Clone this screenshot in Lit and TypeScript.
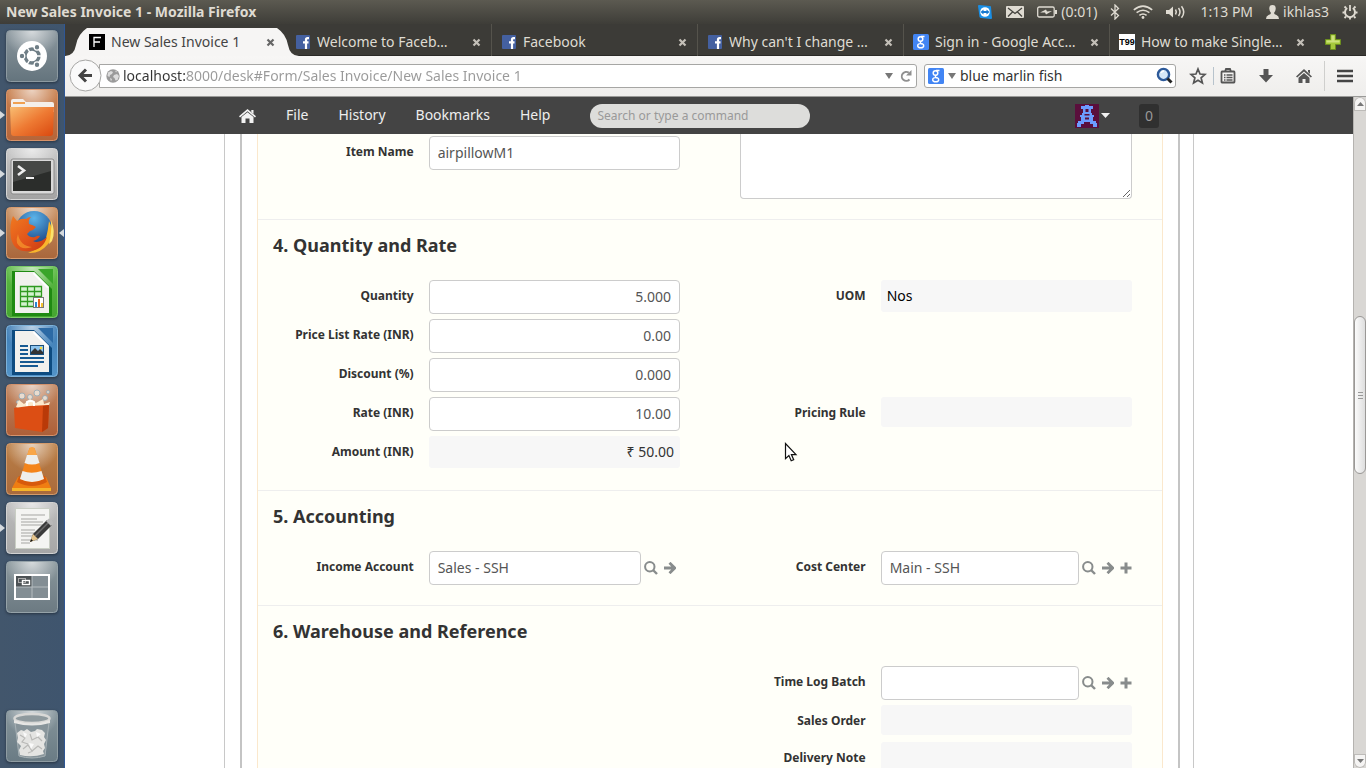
import { LitElement, html, svg, css, nothing } from "lit";
import { customElement, property } from "lit/decorators.js";
import { classMap } from "lit/directives/class-map.js";

/* ---------- Launcher artwork, drawn on a 52 x 52 tile ---------- */

const tile = (from: string, to: string, edge: string, id: string) => svg`
  <defs>
    <linearGradient id=${id} x1="0" y1="0" x2="0" y2="1">
      <stop offset="0" stop-color=${from}></stop>
      <stop offset="1" stop-color=${to}></stop>
    </linearGradient>
    <radialGradient id=${id + "s"} cx=".5" cy="0" r=".55">
      <stop offset="0" stop-color="#fff" stop-opacity=".65"></stop>
      <stop offset="1" stop-color="#fff" stop-opacity="0"></stop>
    </radialGradient>
  </defs>
  <rect x=".5" y=".5" width="51" height="51" rx="4" fill=${`url(#${id})`} stroke=${edge}></rect>
  <rect x="1" y="1" width="50" height="50" rx="4" fill=${`url(#${id}s)`}></rect>`;

const launcherArt: Record<string, unknown> = {
  dash: svg`${tile("#8b979e", "#64747d", "#8d9aa1", "dash")}
    <circle cx="26" cy="26" r="15" fill="#fff"></circle>
    <circle cx="26" cy="26" r="7" fill="none" stroke="#6f7e86" stroke-width="3.4"></circle>
    <path d="M26 26 36 26M26 26 21 17.300M26 26 21 34.700" stroke="#fff" stroke-width="1.400"></path>
    <g fill="#6f7e86" stroke="#fff" stroke-width="1.2">
      <circle cx="16" cy="26" r="2.800"></circle><circle cx="31" cy="17.300" r="2.800"></circle><circle cx="31" cy="34.700" r="2.800"></circle>
    </g>`,
  files: svg`${tile("#c9814f", "#b5653a", "#d8936a", "files")}
    <path d="M5 12q0-2 2-2h10l3 3h26q2 0 2 2v8H5z" fill="#f4efea"></path>
    <path d="M7 13h12v2H7z" fill="#f0a050"></path>
    <defs><linearGradient id="fold" x1="0" y1="0" x2="1" y2="1"><stop offset="0" stop-color="#f8bd72"></stop><stop offset=".5" stop-color="#ee7a33"></stop><stop offset="1" stop-color="#d9480f"></stop></linearGradient></defs>
    <path d="M4 18h44l-1 26q0 3-3 3H8q-3 0-3-3z" fill="url(#fold)"></path>`,
  terminal: svg`${tile("#c6c6c6", "#a3a3a3", "#d6d6d6", "term")}
    <rect x="5" y="11" width="43" height="35" rx="2" fill="#d9d9d9" stroke="#8a8a8a"></rect>
    <rect x="7" y="13" width="38" height="30" fill="#2b2d2b"></rect>
    <path d="M7 13h38v10L7 34z" fill="#454745"></path>
    <path d="M12 18l6 4.500-6 4.500" fill="none" stroke="#eee" stroke-width="2.600"></path>
    <path d="M20 30h8" stroke="#eee" stroke-width="2"></path>`,
  firefox: svg`${tile("#c99061", "#a9673c", "#d79b6e", "ffx")}
    <defs>
      <radialGradient id="globe" cx=".5" cy=".2" r=".9"><stop offset="0" stop-color="#5bb4ea"></stop><stop offset="1" stop-color="#0c2c6e"></stop></radialGradient>
      <linearGradient id="fox" x1="0" y1="0" x2="1" y2="1"><stop offset="0" stop-color="#f07a20"></stop><stop offset=".6" stop-color="#e0511a"></stop><stop offset="1" stop-color="#c63a10"></stop></linearGradient>
    </defs>
    <circle cx="28" cy="22" r="18" fill="url(#globe)"></circle>
    <path d="M43 14q7 14-1 23-8 10-20 9 14-5 18-15 2-7 3-17z" fill="#f8b52c"></path>
    <path d="M45 13q5 12 1 21l-3 3q3-12 2-24z" fill="#fde36a"></path>
    <path d="M7 9l4 5q4-3 9-2 2-2 5-2-3 3-2 7 4 1 7 3-2 3-6 4l-3 3q3 4 8 3 3-2 5-1-2 4-7 5 6 3 14-4-4 13-17 14Q8 46 5 31 3 18 7 9z" fill="url(#fox)"></path>
    <path d="M12 27q2 12 14 13-11 4-15-4-1-4 1-9z" fill="#f79a2e" opacity=".7"></path>`,
  calc: svg`${tile("#5dbb45", "#45a431", "#7acb66", "calc")}
    <path d="M6 5h22l18 18v27H6z" fill="#1f8a12"></path><path d="M32 3h15v15z" fill="#3aa52a"></path>
    <path d="M9 6h19l15 15v26H9z" fill="#f1f1ee"></path><path d="M28 6l15 15-2 1-14-14z" fill="#fff"></path>
    <path d="M14 20h22v21H14z" fill="#d5f2cf"></path>
    <path d="M14.500 20.500h21v20h-21zM14.500 25.500h21M14.500 30.500h21M14.500 35.500h21M21.500 20v21M28.500 20v21" fill="none" stroke="#2f9a20" stroke-width="1.300"></path>
    <rect x="27.500" y="31.500" width="10" height="10" fill="#fff" stroke="#777"></rect>
    <path d="M29 36h2v5h-2z" fill="#2b87d3"></path><path d="M32 33h2v8h-2z" fill="#e8641b"></path><path d="M35 37h2v4h-2z" fill="#f2c12e"></path>`,
  writer: svg`${tile("#3f7db5", "#5293c8", "#7db2da", "wri")}
    <path d="M6 5h22l18 18v27H6z" fill="#0d4b80"></path><path d="M32 3h15v15z" fill="#2c6aa5"></path>
    <path d="M9 6h19l15 15v26H9z" fill="#f1f1ee"></path><path d="M28 6l15 15-2 1-14-14z" fill="#fff"></path>
    <path d="M14 21h8M14 25h8M14 29h8M14 33h24M14 37h24M14 41h18" stroke="#175a92" stroke-width="2"></path>
    <rect x="24.500" y="20.500" width="13" height="9" fill="#8cc4ee" stroke="#1b4f7b"></rect>
    <path d="M25 29v-2l4-4 3 3 2-2 3 3v2z" fill="#333"></path><circle cx="35" cy="23" r="1.300" fill="#f6d738"></circle>`,
  software: svg`${tile("#c08660", "#ad5f38", "#d4926c", "soft")}
    <g fill="#e9dccf" stroke="#8fa7b5" stroke-width=".8"><circle cx="16" cy="12" r="3"></circle><circle cx="24" cy="13" r="2.500"></circle><circle cx="31" cy="9" r="3"></circle><circle cx="39" cy="14" r="2.500"></circle><circle cx="42" cy="8" r="1.500"></circle><circle cx="12" cy="18" r="1.500"></circle></g>
    <path d="M10 23l3-7 5 4 6-5 6 4 7-4 1 5 6-2-2 6H12z" fill="#fbe9cd"></path>
    <path d="M8 24l15-2 20-1-1 23-6 4-27-4z" fill="#dc4e14"></path>
    <path d="M37 22l6-1-1 23-6 4z" fill="#b93a08"></path>
    <path d="M21 22v-4q4-2 7 0v4" fill="none" stroke="#fff" stroke-width="2"></path>`,
  vlc: svg`${tile("#bb8047", "#a96a3c", "#d39a6a", "vlc")}
    <path d="M12 34h28l5 11v3H6v-3z" fill="#f07d12"></path><path d="M6 45h39v3H6z" fill="#f5b52a"></path>
    <path d="M13 33h26l2 6q-15 8-30 0z" fill="#d75a0c"></path>
    <path d="M23.500 5h5L38 36q-12 6-24 0z" fill="#f4841a"></path>
    <path d="M21 12h10l2.500 8q-7.500 3-15 0zM16.500 28q9 3.500 19 0l2.500 8q-12 6-24 0z" fill="#eeeeec"></path>
    <path d="M23.500 5q2.500-2 5 0l2.200 7h-9.500z" fill="#f9a648"></path>`,
  editor: svg`${tile("#bdbdbd", "#a6a6a6", "#d2d2d2", "edit")}
    <rect x="9.500" y="6.500" width="34" height="40" fill="#f4f4f2" stroke="#c9cec4"></rect>
    <path d="M15 13h24M15 17h16M15 20h22M15 23h23M15 28h14M15 31h17M15 34h12M15 38h17M15 41h9" stroke="#a5a5a2" stroke-width="1"></path>
    <path d="M24 40l3-8 14-14 5 5-14 14z" fill="#3a3a3a"></path><path d="M29 34l14-14" stroke="#6a6a6a" stroke-width="1.500"></path>
    <path d="M40 19l3-2.500q3 1 4.500 4.500L45 24z" fill="#b9b9b9"></path><path d="M24 40l3-8 5 5z" fill="#e5c48b"></path><path d="M24 40l1.200-3 1.800 1.800z" fill="#111"></path>`,
  workspaces: svg`${tile("#8a979c", "#6c7a82", "#95a2a8", "work")}
    <rect x="9" y="14" width="34" height="24" fill="#838e94" stroke="#fff" stroke-width="2"></rect>
    <path d="M10 15h16v11H10z" fill="#4d5356"></path><path d="M26 15v22M10 26h32" stroke="#b5bcbf"></path>
    <rect x="12.500" y="17.500" width="7" height="4" fill="none" stroke="#aaa"></rect><rect x="16.500" y="19.500" width="7" height="4" fill="none" stroke="#fff" stroke-width="1.400"></rect>`,
  trash: svg`${tile("#85949b", "#6a7b84", "#8f9ca2", "trash")}
    <path d="M9 12h34l-4 34q-13 4-26 0z" fill="#87949a" stroke="#a7b1b5"></path>
    <path d="M11 23l4-3 3 1 3-2 4 3 4-1 2-2 5 1 3 3-1 4 2 3-2 4 1 4-2 3 1 3q-12 4-24 1l-1-5 2-4-4-4 1-4z" fill="#e4e4e2"></path>
    <path d="M14 25l5 3-3 4 6 2M24 24l2 6 6-3 4 4M17 39l5-4 4 6 6-5 4 3M22 43l5-2" fill="none" stroke="#b9b9b7" stroke-width="1.200"></path>
    <path d="M17 22l4 2-2 4zM30 22l5 2-4 3zM23 33l5 1-3 5z" fill="#fafafa"></path>
    <ellipse cx="26" cy="8.500" rx="17.500" ry="4.500" fill="#8f9a9e" stroke="#d8d8d6" stroke-width="2.500"></ellipse>
    <path d="M8 10q18 7 36 0v3q-18 5-36 0z" fill="#e6e6e4"></path>`,
};

const launcherItems = [
  { id: "dash", name: "Dash home", running: false },
  { id: "files", name: "Files", running: true },
  { id: "terminal", name: "Terminal", running: true },
  { id: "firefox", name: "Firefox", running: true, active: true },
  { id: "calc", name: "LibreOffice Calc", running: false },
  { id: "writer", name: "LibreOffice Writer", running: false },
  { id: "software", name: "Software Centre", running: false },
  { id: "vlc", name: "VLC", running: false },
  { id: "editor", name: "Text Editor", running: true },
  { id: "workspaces", name: "Workspaces", running: false },
  { id: "trash", name: "Trash", running: false },
];

/* ---------- Small icons ---------- */

const icon = (w: number, h: number, body: unknown) =>
  html`<svg width=${w} height=${h} viewBox="0 0 ${w} ${h}" aria-hidden="true">${body}</svg>`;

const googleG = svg`
  <rect width="16" height="16" rx="1.500" fill="#4285f4"></rect>
  <g fill="none" stroke="#fff"><circle cx="7.500" cy="5" r="2.300" stroke-width="1.500"></circle><ellipse cx="7.700" cy="11.700" rx="3" ry="2.100" stroke-width="1.400"></ellipse><path d="M8 2.500h3.500M8.500 7.200q-2 .800-.500 2l1.500 1" stroke-width="1.300"></path></g>`;

const favicons: Record<string, unknown> = {
  frappe: svg`<rect width="16" height="16" fill="#000"></rect><path d="M5 13V3.500h7M5 8h6" fill="none" stroke="#fff" stroke-width="1.300"></path>`,
  facebook: svg`<rect x="1" y="1" width="14" height="14" rx="1" fill="#4460a0"></rect><path d="M14 4.200h-1.500q-1.500 0-1.500 1.500V15M8 8.400h5.500" fill="none" stroke="#fff" stroke-width="2.200"></path>`,
  google: googleG,
};

const closeX = icon(9, 9, svg`<path d="M1.500 1.500l6 6M7.500 1.500l-6 6" stroke="currentColor" stroke-width="2.200"></path>`);
const magnifier = icon(14, 14, svg`<circle cx="5.800" cy="5.800" r="4.700" fill="none" stroke="currentColor" stroke-width="2"></circle><path d="M9 9l4 4" stroke="currentColor" stroke-width="2.400"></path>`);
const arrowRight = icon(12, 12, svg`<path d="M0 6h10M5.500 .800l5.200 5.200-5.200 5.200" fill="none" stroke="currentColor" stroke-width="2.800"></path>`);
const plus = icon(12, 12, svg`<path d="M.500 6h11M6 .500v11" stroke="currentColor" stroke-width="3"></path>`);
const chevron = icon(8, 6, svg`<path d="M0 0h8L4 6z" fill="#777"></path>`);

const tabs = [
  { title: "New Sales Invoice 1", fav: "frappe", active: true },
  { title: "Welcome to Faceb…", fav: "facebook" },
  { title: "Facebook", fav: "facebook" },
  { title: "Why can't I change …", fav: "facebook" },
  { title: "Sign in - Google Acc…", fav: "google" },
  { title: "How to make Single…", fav: "t99" },
];

/* ---------- Unity launcher ---------- */

@customElement("unity-launcher")
class UnityLauncher extends LitElement {
  static styles = css`
    :host { display: flex; flex-direction: column; gap: 7px; box-sizing: border-box; padding: 6px 6px; width: 65px;
      background: linear-gradient(90deg, #42566c, #3f556e); border-right: 1px solid #2f5796; }
    .slot { position: relative; display: flex; }
    .slot.last { margin-top: auto; }
    button { all: unset; display: block; width: 52px; height: 52px; border-radius: 4px; box-shadow: 0 1px 3px rgba(0, 0, 0, 0.4); }
    svg { display: block; }
    .run::before { content: ""; position: absolute; left: -6px; top: 22px; border: 4px solid transparent; border-left: 5px solid #d5dade; border-right: 0; }
    .focus::after { content: ""; position: absolute; right: -6px; top: 22px; border: 4px solid transparent; border-right: 5px solid #d5dade; border-left: 0; }
  `;
  render() {
    return launcherItems.map(
      (it, i) => html`<div class=${classMap({ slot: true, last: i === launcherItems.length - 1, run: it.running, focus: !!it.active })}>
        <button aria-label=${it.name}>${icon(52, 52, launcherArt[it.id])}</button>
      </div>`
    );
  }
}

/* ---------- One row of the form: label plus control ---------- */

@customElement("form-field")
class FormField extends LitElement {
  @property() label = "";
  @property() value = "";
  @property() kind: "text" | "number" | "link" | "output" = "text";
  @property({ type: Boolean }) creatable = false;
  @property({ type: Boolean }) money = false;

  static styles = css`
    :host { display: grid; grid-template-columns: minmax(0, 1fr) minmax(0, 2fr); margin: 0 15px; font-family: "Noto Sans", sans-serif; align-items: start; }
    label { padding-top: 7px; text-align: right; font-size: 12px; line-height: 17px; font-weight: 700; color: #333; }
    .control { display: flex; align-items: center; margin: 0 15px; }
    input { flex: 1; min-width: 0; box-sizing: border-box; height: 34px; padding: 5px 8px 7px; border: 1px solid #ccc; border-radius: 4px;
      background: #fff; font: 14px/20px "Noto Sans", sans-serif; color: #555; outline: none; }
    .number { text-align: right; }
    output { flex: 1; box-sizing: border-box; min-height: 30px; padding: 6px 6px; margin-bottom: 2px; border-radius: 3px; background: #f7f7f7; font-size: 14px; line-height: 20px; color: #000; }
    .money { text-align: right; color: #333; }
    .tools { display: flex; align-items: center; gap: 6px; margin-left: 3px; padding-right: 4px; color: #888c8c; }
    .full { padding-right: 0; }
    button { all: unset; display: flex; }
  `;
  render() {
    const k = this.kind;
    return html`
      <label for="c">${this.label}</label>
      <div class="control">
        ${k === "output"
          ? html`<output id="c" class=${classMap({ money: this.money })}>${this.value}</output>`
          : html`<input id="c" class=${k} .value=${this.value} />`}
        ${k === "link"
          ? html`<span class=${classMap({ tools: true, full: this.creatable })}>
              <button aria-label="Search">${magnifier}</button>
              <button aria-label="Open">${arrowRight}</button>
              ${this.creatable ? html`<button aria-label="New">${plus}</button>` : nothing}
            </span>`
          : nothing}
      </div>`;
  }
}

@customElement("app-root")
class AppRoot extends LitElement {
  static styles = css`
    :host { display: grid; grid-template-rows: auto minmax(0, 1fr); height: 100vh; overflow: hidden; position: relative; font-family: "Noto Sans", sans-serif; }
    button { all: unset; display: flex; align-items: center; }
    svg { display: block; flex: none; }

    .panel { display: flex; align-items: center; box-sizing: border-box; height: 24px; padding: 0 8px 0 6px; background: linear-gradient(#5c5a51, #3e3d38); color: #dfdbd2; }
    .panel h1 { flex: 1; margin: 0; font-size: 14px; line-height: 24px; font-weight: 700; }
    .indicators { display: flex; align-items: center; gap: 13px; font-size: 14px; line-height: 24px; }
    .indicators span { display: flex; align-items: center; gap: 4px; }

    .desktop { display: grid; grid-template-columns: auto minmax(0, 1fr); min-height: 0; }
    .browser { display: grid; grid-template-rows: auto auto minmax(0, 1fr); min-height: 0; }

    .tabs { display: flex; height: 32px; padding: 0 51px 0 14px; background: #3c3b37; position: relative; box-shadow: inset 0 -1px #2b2a27; }
    .tab { position: relative; flex: 1 1 0; min-width: 0; display: flex; align-items: center; gap: 6px; padding: 4px 10px 0; color: #dfdbd2; font: 14px/20px "Noto Sans", sans-serif; box-sizing: border-box; }
    .tab .title { flex: 1; min-width: 0; overflow: hidden; white-space: nowrap; display: block; }
    .tab .close { color: #c4c0b8; }
    .tab:not(.active) + .tab { border-left: 1px solid #55534c; padding-left: 9px; }
    .active { color: #444; }
    .active .close { color: #666; }
    .shape { position: absolute; left: -14px; right: -14px; top: 4px; height: 28px; display: flex; }
    .shape i { flex: 1; background: #f6f5f4; }
    .title, .close, .tab > svg, .t99 { position: relative; }
    .t99 { flex: none; width: 16px; height: 16px; background: #fff; color: #000; font: 700 9px/16px "Liberation Sans", sans-serif; text-align: center; }
    .newtab { position: absolute; right: 25px; top: 10px; }

    .toolbar { display: flex; align-items: center; box-sizing: border-box; height: 41px; padding: 0 13px 1px 4px; background: linear-gradient(#f7f6f5, #efeeec); border-bottom: 1px solid #9a9a98; }
    .back { position: relative; z-index: 1; margin-right: -1px; }
    .url, .search { display: flex; align-items: center; box-sizing: border-box; height: 24px; background: #fff; border: 1px solid #a6a6a4; border-radius: 0 3px 3px 0; }
    .url { flex: 1; gap: 7px; padding: 0 4px 0 6px; margin-left: -2px; }
    .search { width: 252px; flex: none; border-radius: 3px; margin: 0 13px 0 7px; padding: 0 2px 0 3px; gap: 4px; }
    .url input, .search input { flex: 1; min-width: 0; border: 0; padding: 1px 0 0; background: none; outline: none; font: 14px/20px "Noto Sans", sans-serif; color: #333; }
    .url input { margin-left: -4px; background: linear-gradient(90deg, #333 64px, #999 64px); -webkit-background-clip: text; background-clip: text; color: transparent; }
    .actions { display: flex; align-items: center; color: #555; gap: 22px; }
    .actions .pair { display: flex; align-items: center; gap: 6px; }
    .rule { width: 1px; height: 18px; background: #b7c3cc; }
    .tall { height: 30px; background: #cfcfcd; margin: 0 -10px 0 -10px; }

    .view { display: grid; grid-template-columns: minmax(0, 1fr) 13px; min-height: 0; }
    .page { display: grid; grid-template-rows: auto minmax(0, 1fr); min-height: 0; background: #fff; }
    .navbar { background: #444; }
    .nav { display: flex; align-items: center; max-width: 970px; height: 37px; margin: 0 auto; box-sizing: border-box; padding-right: 35px; }
    .nav a { padding: 0 15px 2px; color: #eee; text-decoration: none; font-size: 14px; line-height: 34px; }
    .nav .home { padding: 0 15px; }
    .nav input { width: 220px; height: 24px; box-sizing: border-box; margin-left: 25px; padding: 0 7px; border: 0; border-radius: 12px; background: #dddddb; font: 12px/20px "Noto Sans", sans-serif; color: #555; outline: none; }
    .nav input::placeholder { color: #999; opacity: 1; }
    .user { margin-left: auto; gap: 2px; }
    .count { margin-left: 29px; justify-content: center; width: 20px; height: 24px; border-radius: 3px; background: #303030; color: #999; font-size: 14px; line-height: 20px; }

    .scroll { overflow: hidden; min-height: 0; }
    .sheet { box-sizing: border-box; width: 100%; max-width: 970px; margin: 0 auto; padding: 0 13px 0 15px; border: solid #c8c8c8; border-width: 0 1px; }
    .frame { padding: 0 15px; border: solid #c4c4c4; border-width: 0 2px; }
    form { display: block; background: #fffff9; border: solid #fbe8cd; border-width: 0 1px; }
    section { padding: 15px 0 20px; border-top: 1px solid #eee; }
    section.cut { padding-top: 0; border-top: 0; }
    h2 { margin: 0 15px 25px; font-size: 18px; line-height: 20px; font-weight: 700; color: #333; }
    .cols { display: grid; grid-template-columns: repeat(2, minmax(0, 1fr)); row-gap: 5px; }
    .right { grid-column: 2; }
    .left { grid-column: 1; }
    .cut form-field { padding-top: 2px; }
    textarea { display: block; margin: 0 30px; box-sizing: border-box; height: 65px; border: 1px solid #ccc; border-top: 0; border-radius: 0 0 4px 4px; background: #fff; resize: vertical; outline: none; }

    .bar { display: grid; grid-template-rows: 14px minmax(0, 205fr) 158px minmax(0, 280fr) 14px; background: #d9d7d4; border-left: 1px solid #b5b3b0; box-sizing: border-box; }
    .bar button { justify-content: center; background: #f5f4f3; box-shadow: inset 0 0 0 1px #bdbbb8; border-radius: 6px 6px 0 0; }
    .thumb { grid-row: 3; box-sizing: border-box; border: 1px solid #9a9896; border-radius: 6px; background: linear-gradient(90deg, #fbfbfb, #dedede); display: grid; place-items: center; }
    .bar .down { grid-row: 5; border-radius: 0 0 6px 6px; }
    .cursor { position: absolute; left: 784px; top: 442px; }
  `;

  private renderPanel() {
    return html`<header class="panel">
      <h1>New Sales Invoice 1 - Mozilla Firefox</h1>
      <div class="indicators">
        ${icon(16, 16, svg`<path d="M1 2q0-1 1-1l11 1q1 0 1 1l1 11q0 1-1 1L4 14q-1 0-1.500-1z" fill="#1a8fe6"></path><circle cx="8" cy="8" r="4.800" fill="#fff"></circle><path d="M3.500 8l3-2.500V7h3V5.500l3 2.500-3 2.500V9h-3v1.500z" fill="#1578d0"></path>`)}
        <span>${icon(18, 14, svg`<rect x="0" y="1" width="18" height="12" rx="1" fill="#dfdbd2"></rect><path d="M2 3l7 5.500L16 3M2 11.500l4.500-4.500M16 11.500l-4.500-4.500" fill="none" stroke="#44433e" stroke-width="1.300"></path>`)}</span>
        <span>${icon(20, 12, svg`<rect x=".700" y="1" width="16.500" height="10" rx="1.500" fill="none" stroke="#dfdbd2" stroke-width="1.300"></rect><path d="M18 4h2v4h-2z" fill="#dfdbd2"></path><path d="M3 6.500L9 3.500l1 2 5-.500-6 3.500-1-2z" fill="#dfdbd2"></path>`)}(0:01)</span>
        ${icon(10, 16, svg`<path d="M1 4.500l7.500 7L5 15V1l3.500 3.500-7.500 7" fill="none" stroke="#dfdbd2" stroke-width="1.300"></path>`)}
        ${icon(20, 14, svg`<path d="M.800 4.800q9.200-7.500 18.400 0M3.600 7.700q6.400-5 12.800 0M6.400 10.400q3.600-2.800 7.200 0" fill="none" stroke="#dfdbd2" stroke-width="1.600"></path><circle cx="10" cy="12.500" r="1.400" fill="#dfdbd2"></circle>`)}
        ${icon(21, 14, svg`<path d="M0 5h3l4-3.500v11L3 9H0z" fill="#dfdbd2"></path><path d="M9.500 4.500q1.600 2.500 0 5M12.500 3q3 4 0 8M15.500 1.200q4.500 5.800 0 11.600" fill="none" stroke="#dfdbd2" stroke-width="1.500"></path>`)}
        <span>1:13 PM</span>
        <span>${icon(13, 14, svg`<path d="M6.500 0q3.500 0 3.200 4-.200 2.500-1.700 4 .200 1.500 2.500 2Q13 10.800 13 14H0q0-3.200 2.500-4 2.300-.500 2.500-2Q3.500 6.500 3.300 4 3 0 6.500 0z" fill="#dfdbd2"></path>`)}ikhlas3</span>
        ${icon(16, 16, svg`<g fill="none" stroke="#dfdbd2"><path d="M5.200 4A5 5 0 1 0 10.800 4" stroke-width="2"></path><path d="M8 1v6M2.500 2.500L4 4M13.500 2.500L12 4M.500 8.500h2M13.500 8.500h2M2.500 14l1.500-1.500M13.500 14L12 12.500M8 13.500v2" stroke-width="1.800"></path></g>`)}
      </div>
    </header>`;
  }

  private renderTabs() {
    return html`<nav class="tabs" aria-label="Tabs">
      ${tabs.map(
        (t) => html`<div class=${classMap({ tab: true, active: !!t.active })}>
          ${t.active
            ? html`<div class="shape">
                ${icon(22, 28, svg`<path d="M0 28Q9 28 11 17T22 0V28z" fill="#f6f5f4"></path>`)}<i></i>
                ${icon(22, 28, svg`<path d="M22 28Q13 28 11 17T0 0V28z" fill="#f6f5f4"></path>`)}
              </div>`
            : nothing}
          ${t.fav === "t99" ? html`<span class="t99">T99</span>` : icon(16, 16, favicons[t.fav])}
          <button class="title">${t.title}</button>
          <button class="close" aria-label="Close tab">${closeX}</button>
        </div>`
      )}
      <button class="newtab" aria-label="New tab">
        ${icon(16, 16, svg`<path d="M5.500.500h5v5h5v5h-5v5h-5v-5h-5v-5h5z" fill="#a5c93c" stroke="#6c8f1d"></path><path d="M6.500 1.500h3v5h5v2h-13v-2h5z" fill="#cde27d"></path>`)}
      </button>
    </nav>`;
  }

  private renderToolbar() {
    return html`<div class="toolbar">
      <button class="back" aria-label="Back">
        ${icon(33, 33, svg`<circle cx="16.500" cy="16.500" r="15.500" fill="#fafafa" stroke="#a6a6a4"></circle><path d="M23 16.500H12M17 10.500l-6 6 6 6" fill="none" stroke="#444" stroke-width="3"></path>`)}
      </button>
      <div class="url">
        ${icon(14, 14, svg`<circle cx="7" cy="7" r="6.700" fill="#9a9a9a"></circle><path d="M2 3.500l3-1.500 2 1-1 2-2 1-.500 2-2-1zM8 6l3-1 2 2-1.500 4-2 .500-1-2.500-1.500-1zM9 1.500l2 1-1 1zM4 9l2 1-1 2.500z" fill="#dcdcdc"></path>`)}
        <input aria-label="Address" .value=${"localhost:8000/desk#Form/Sales Invoice/New Sales Invoice 1"} />
        <button aria-label="History list">${chevron}</button>
        <button aria-label="Reload">${icon(12, 12, svg`<path d="M9.500 9.500A4.500 4.500 0 1 1 8.800 2.600" fill="none" stroke="#909090" stroke-width="1.900"></path><path d="M11.500 0v5.500H6z" fill="#909090"></path>`)}</button>
      </div>
      <div class="search">
        <button aria-label="Search engine">${icon(16, 16, googleG)}</button>
        <button aria-label="Choose engine">${chevron}</button>
        <input aria-label="Search the web" .value=${"blue marlin fish"} />
        <button aria-label="Search">${icon(17, 17, svg`<circle cx="7.500" cy="7.500" r="5.600" fill="#d7e8f8" stroke="#2d5a9a" stroke-width="2.400"></circle><path d="M5 6q1-2 3-2" fill="none" stroke="#fff" stroke-width="1.500"></path><path d="M11.500 11.500l4 4" stroke="#222" stroke-width="3"></path>`)}</button>
      </div>
      <div class="actions">
        <div class="pair">
          <button aria-label="Bookmark this page">${icon(18, 18, svg`<path d="M9 2l2 5 5 .400-3.900 3.400L13.400 16 9 13.200 4.600 16l1.300-5.200L2 7.400 7 7z" fill="none" stroke="#555" stroke-width="1.700"></path>`)}</button>
          <span class="rule"></span>
          <button aria-label="Bookmarks">${icon(16, 16, svg`<path d="M2 3.500h12q.500 0 .500 1v9q0 1-.500 1H2q-.500 0-.500-1v-9q0-1 .500-1zM5 3.500L6 1h4l1 2.500" fill="none" stroke="#555" stroke-width="1.800"></path><path d="M4 7h1.500M4 9.500h1.500M4 12h1.500M6.500 7h6M6.500 9.500h6M6.500 12h6" stroke="#555" stroke-width="1.300"></path>`)}</button>
        </div>
        <button aria-label="Downloads">${icon(16, 16, svg`<path d="M5.500 1h5v6h4.500l-7 7.500-7-7.500h4.500z" fill="#555"></path>`)}</button>
        <button aria-label="Home page">${icon(16, 16, svg`<path d="M8 1l8 7.500-1.200 1L8 3.600 1.200 9.500 0 8.500z" fill="#555"></path><path d="M8 5l5.500 4.800V15h-4v-4h-3v4h-4V9.800z" fill="#555"></path><path d="M12 2h2v4l-2-2z" fill="#555"></path>`)}</button>
        <span class="rule tall"></span>
        <button aria-label="Menu">${icon(16, 14, svg`<path d="M0 2h16M0 7h16M0 12h16" stroke="#444" stroke-width="2.400"></path>`)}</button>
      </div>
    </div>`;
  }

  private renderNavbar() {
    return html`<div class="navbar"><nav class="nav" aria-label="Desk">
      <a class="home" href="#" aria-label="Home">${icon(17, 14, svg`<path d="M8.500 0L17 7.200l-1 1.200-7.500-6.200L1 8.400 0 7.200z" fill="#f2f2f2"></path><path d="M8.500 3.200L14.500 8v6h-4V9.500h-4V14h-4V8z" fill="#f2f2f2"></path><path d="M12.300 1h2.200v4l-2.200-1.800z" fill="#f2f2f2"></path>`)}</a>
      <a href="#">File</a><a href="#">History</a><a href="#">Bookmarks</a><a href="#">Help</a>
      <input type="search" aria-label="Search" placeholder="Search or type a command" />
      <button class="user" aria-label="User menu">
        ${icon(24, 24, svg`<rect width="24" height="24" fill="#5a0f3c"></rect><path fill-rule="evenodd" d="M10 1h4v1h4v3h-2v4h1v2h2v2h-1v4h3v2h1v4h-4v-3h-3v-2H9v2H6v3H2v-4h1v-2h3v-4H5v-2h2V9h1V5H6V2h4zM10.500 5v3h3V5zM9.500 10v1.500h5V10zM10 13.500v2h4v-2z" fill="#6c9cff"></path>`)}
        ${icon(9, 5, svg`<path d="M0 0h9L4.500 5z" fill="#f2f2f2"></path>`)}
      </button>
      <button class="count">0</button>
    </nav></div>`;
  }

  private renderForm() {
    return html`<form>
      <section class="cut cols">
        <form-field label="Item Name" value="airpillowM1"></form-field>
        <textarea aria-label="Description"></textarea>
      </section>
      <section>
        <h2>4. Quantity and Rate</h2>
        <div class="cols">
          <form-field class="left" kind="number" label="Quantity" value="5.000"></form-field>
          <form-field class="right" kind="output" label="UOM" value="Nos"></form-field>
          <form-field class="left" kind="number" label="Price List Rate (INR)" value="0.00"></form-field>
          <form-field class="left" kind="number" label="Discount (%)" value="0.000"></form-field>
          <form-field class="left" kind="number" label="Rate (INR)" value="10.00"></form-field>
          <form-field class="right" kind="output" label="Pricing Rule"></form-field>
          <form-field class="left" kind="output" money label="Amount (INR)" value="₹ 50.00"></form-field>
        </div>
      </section>
      <section>
        <h2>5. Accounting</h2>
        <div class="cols">
          <form-field kind="link" label="Income Account" value="Sales - SSH"></form-field>
          <form-field kind="link" creatable label="Cost Center" value="Main - SSH"></form-field>
        </div>
      </section>
      <section>
        <h2>6. Warehouse and Reference</h2>
        <div class="cols">
          <form-field class="right" kind="link" creatable label="Time Log Batch"></form-field>
          <form-field class="right" kind="output" label="Sales Order"></form-field>
          <form-field class="right" kind="output" label="Delivery Note"></form-field>
        </div>
      </section>
    </form>`;
  }

  render() {
    return html`
      ${this.renderPanel()}
      <div class="desktop">
        <unity-launcher></unity-launcher>
        <div class="browser">
          ${this.renderTabs()} ${this.renderToolbar()}
          <div class="view">
            <div class="page">
              ${this.renderNavbar()}
              <main class="scroll"><div class="sheet"><div class="frame">${this.renderForm()}</div></div></main>
            </div>
            <div class="bar">
              <button class="up" aria-label="Scroll up">${icon(7, 4, svg`<path d="M0 4L3.500 0 7 4z" fill="#777"></path>`)}</button>
              <div class="thumb">${icon(5, 9, svg`<path d="M0 1.500h5M0 4.500h5M0 7.500h5" stroke="#999"></path>`)}</div>
              <button class="down" aria-label="Scroll down">${icon(7, 4, svg`<path d="M0 0l3.500 4L7 0z" fill="#777"></path>`)}</button>
            </div>
          </div>
        </div>
      </div>
      <svg class="cursor" width="14" height="20" viewBox="0 0 14 20" aria-hidden="true">
        <path d="M1.500 1.500v15.200l3.400-3.200 2.300 5.300 2.500-1.100-2.300-5.100h4.600z" fill="#fff" stroke="#111" stroke-width="1.200"></path>
      </svg>`;
  }
}
